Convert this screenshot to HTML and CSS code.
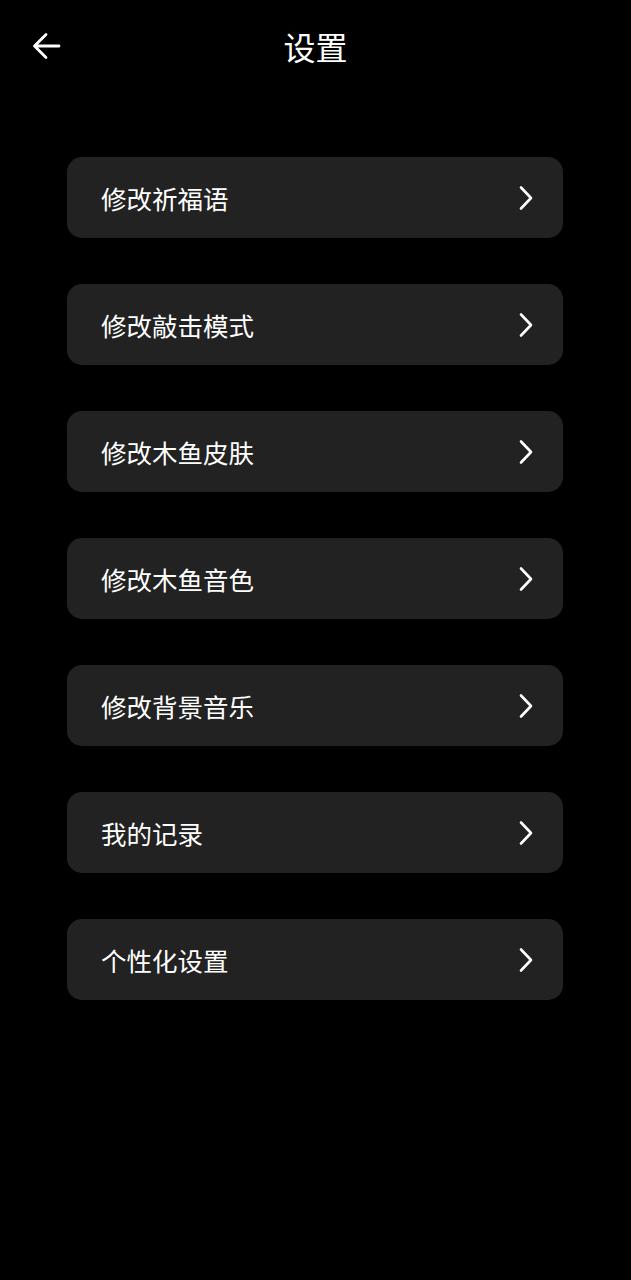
FILE: index.html
```html
<!DOCTYPE html>
<html lang="zh">
<head>
<meta charset="utf-8">
<link rel="stylesheet" href="styles.css">
</head>
<body>
<div class="page">
  <header class="header">
    <button class="back" aria-label="返回">
      <svg width="30" height="30" viewBox="0 0 30 30"><path d="M28 15H4M15 3.5L3.5 15L15 26.5" fill="none" stroke="#fff" stroke-width="2.8" stroke-linecap="round" stroke-linejoin="round"/></svg>
    </button>
    <h1 class="title">设置</h1>
  </header>
  <ul class="list">
    <li class="item"><span class="label">修改祈福语</span><svg class="chev" width="16" height="26" viewBox="0 0 16 26"><path d="M3 2.5L13 13L3 23.5" fill="none" stroke="#fff" stroke-width="2.6" stroke-linecap="round" stroke-linejoin="round"/></svg></li>
    <li class="item"><span class="label">修改敲击模式</span><svg class="chev" width="16" height="26" viewBox="0 0 16 26"><path d="M3 2.5L13 13L3 23.5" fill="none" stroke="#fff" stroke-width="2.6" stroke-linecap="round" stroke-linejoin="round"/></svg></li>
    <li class="item"><span class="label">修改木鱼皮肤</span><svg class="chev" width="16" height="26" viewBox="0 0 16 26"><path d="M3 2.5L13 13L3 23.5" fill="none" stroke="#fff" stroke-width="2.6" stroke-linecap="round" stroke-linejoin="round"/></svg></li>
    <li class="item"><span class="label">修改木鱼音色</span><svg class="chev" width="16" height="26" viewBox="0 0 16 26"><path d="M3 2.5L13 13L3 23.5" fill="none" stroke="#fff" stroke-width="2.6" stroke-linecap="round" stroke-linejoin="round"/></svg></li>
    <li class="item"><span class="label">修改背景音乐</span><svg class="chev" width="16" height="26" viewBox="0 0 16 26"><path d="M3 2.5L13 13L3 23.5" fill="none" stroke="#fff" stroke-width="2.6" stroke-linecap="round" stroke-linejoin="round"/></svg></li>
    <li class="item"><span class="label">我的记录</span><svg class="chev" width="16" height="26" viewBox="0 0 16 26"><path d="M3 2.5L13 13L3 23.5" fill="none" stroke="#fff" stroke-width="2.6" stroke-linecap="round" stroke-linejoin="round"/></svg></li>
    <li class="item"><span class="label">个性化设置</span><svg class="chev" width="16" height="26" viewBox="0 0 16 26"><path d="M3 2.5L13 13L3 23.5" fill="none" stroke="#fff" stroke-width="2.6" stroke-linecap="round" stroke-linejoin="round"/></svg></li>
  </ul>
</div>
</body>
</html>
```
FILE: styles.css
```css
html, body {
  margin: 0;
  padding: 0;
  background: #000;
}
body {
  font-family: "Noto Sans CJK SC", "Noto Sans", sans-serif;
  color: #fff;
  width: 631px;
  min-height: 1280px;
}
.page {
  display: flex;
  flex-direction: column;
}
.header {
  position: relative;
  height: 96px;
  display: flex;
  align-items: flex-start;
  justify-content: center;
}
.back {
  position: absolute;
  left: 31px;
  top: 31px;
  width: 30px;
  height: 30px;
  padding: 0;
  border: 0;
  background: none;
  display: flex;
}
.title {
  margin: 0;
  margin-top: 24px;
  font-size: 32px;
  font-weight: 400;
  line-height: 44px;
}
.list {
  list-style: none;
  margin: 61px 0 0 67px;
  padding: 0;
  width: 496px;
  display: flex;
  flex-direction: column;
  gap: 46px;
}
.item {
  height: 81px;
  border-radius: 15px;
  background: #222222;
  display: flex;
  align-items: center;
  justify-content: space-between;
  padding: 0 29px 0 34px;
  box-sizing: border-box;
}
.label {
  font-size: 25.5px;
  line-height: 36px;
  margin-top: 1px;
}
.chev {
  display: block;
  margin-top: 1px;
}
```
